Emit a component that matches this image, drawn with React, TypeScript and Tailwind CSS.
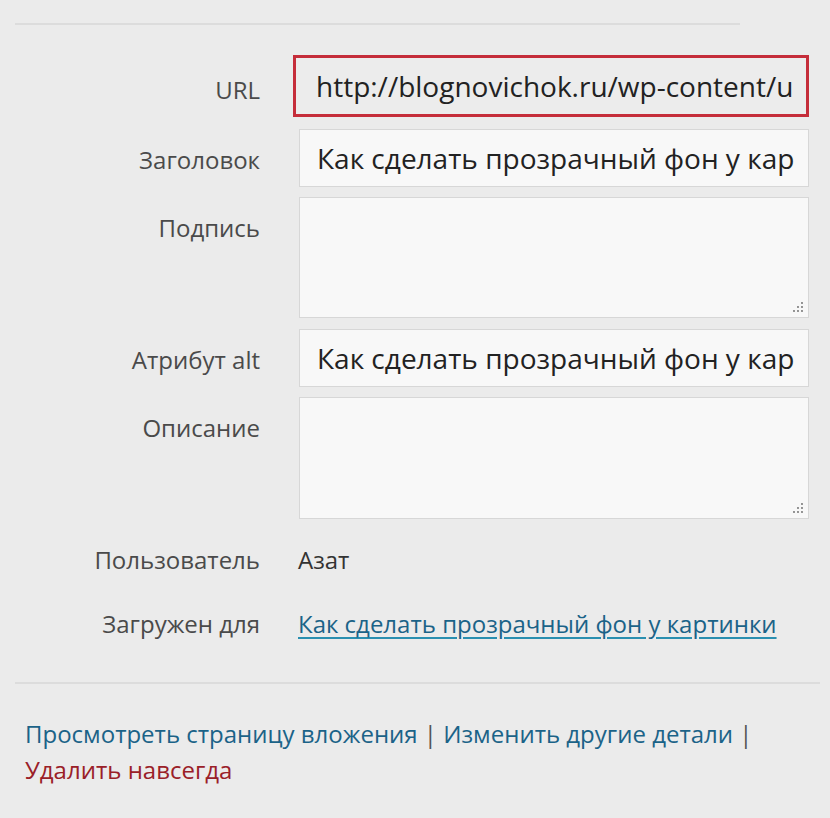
import React from "react";

const font = { fontFamily: '"Open Sans", "Noto Sans", sans-serif' };

function Grip() {
  return (
    <svg className="absolute right-[4px] bottom-[4px]" width="12" height="12" viewBox="0 0 12 12">
      <circle cx="10" cy="2" r="0.9" fill="#666" />
      <circle cx="10" cy="6" r="0.9" fill="#666" />
      <circle cx="10" cy="10" r="0.9" fill="#666" />
      <circle cx="6" cy="6" r="0.9" fill="#666" />
      <circle cx="6" cy="10" r="0.9" fill="#666" />
      <circle cx="2" cy="10" r="0.9" fill="#666" />
    </svg>
  );
}

export default function App() {
  return (
    <div className="w-[830px] h-[818px] bg-[#ebebeb] overflow-hidden text-[#4a4a4a]" style={font}>
      <div className="pt-[23px]">
        <div className="ml-[15px] w-[725px] h-[2px] bg-[#dcdcdc]" />
      </div>

      <div className="mt-[30px] grid grid-cols-[260px_1fr] gap-x-[39px] pr-[21px]">
        {/* URL */}
        <div className="text-right text-[24px] pt-[17px]">URL</div>
        <div className="-ml-[6px] h-[62px] border-[3px] border-[#c52d3a] bg-[#ececec] flex items-center pl-[20px] text-[28px] text-[#222] overflow-hidden whitespace-nowrap">
          http://blognovichok.ru/wp-content/u
        </div>

        {/* Заголовок */}
        <div className="text-right text-[24px] pt-[13px] mt-[12px]">Заголовок</div>
        <div className="mt-[12px] h-[58px] border border-[#d7d7d7] bg-[#f8f8f8] flex items-center pl-[17px] text-[28px] text-[#222] overflow-hidden whitespace-nowrap">
          Как сделать прозрачный фон у кар
        </div>

        {/* Подпись */}
        <div className="text-right text-[24px] pt-[13px] mt-[10px]">Подпись</div>
        <div className="relative mt-[10px] h-[121px] border border-[#d7d7d7] bg-[#f8f8f8]">
          <Grip />
        </div>

        {/* alt */}
        <div className="text-right text-[24px] pt-[13px] mt-[11px]">Атрибут alt</div>
        <div className="mt-[11px] h-[58px] border border-[#d7d7d7] bg-[#f8f8f8] flex items-center pl-[17px] text-[28px] text-[#222] overflow-hidden whitespace-nowrap">
          Как сделать прозрачный фон у кар
        </div>

        {/* Описание */}
        <div className="text-right text-[24px] pt-[13px] mt-[10px]">Описание</div>
        <div className="relative mt-[10px] h-[122px] border border-[#d7d7d7] bg-[#f8f8f8]">
          <Grip />
        </div>

        {/* Пользователь */}
        <div className="text-right text-[24px] mt-[23px]">Пользователь</div>
        <div className="-ml-[1px] mt-[23px] text-[24px] text-[#333]">Азат</div>

        {/* Загружен для */}
        <div className="text-right text-[24px] mt-[28px]">Загружен для</div>
        <div className="-ml-[1px] mt-[28px] text-[24px]">
          <a className="text-[#1b6388] underline decoration-[#2a8fb0] underline-offset-[4px]">Как сделать прозрачный фон у картинки</a>
        </div>
      </div>

      <div className="mt-[40px] ml-[15px] w-[805px] h-[2px] bg-[#dcdcdc]" />

      <div className="mt-[32px] pl-[25px] text-[24px] leading-[36px]">
        <div>
          <a className="text-[#1b6388]">Просмотреть страницу вложения</a>
          <span className="text-[#555]"> | </span>
          <a className="text-[#1b6388]">Изменить другие детали</a>
          <span className="text-[#555]"> |</span>
        </div>
        <div>
          <a className="text-[#9a2028]">Удалить навсегда</a>
        </div>
      </div>
    </div>
  );
}
